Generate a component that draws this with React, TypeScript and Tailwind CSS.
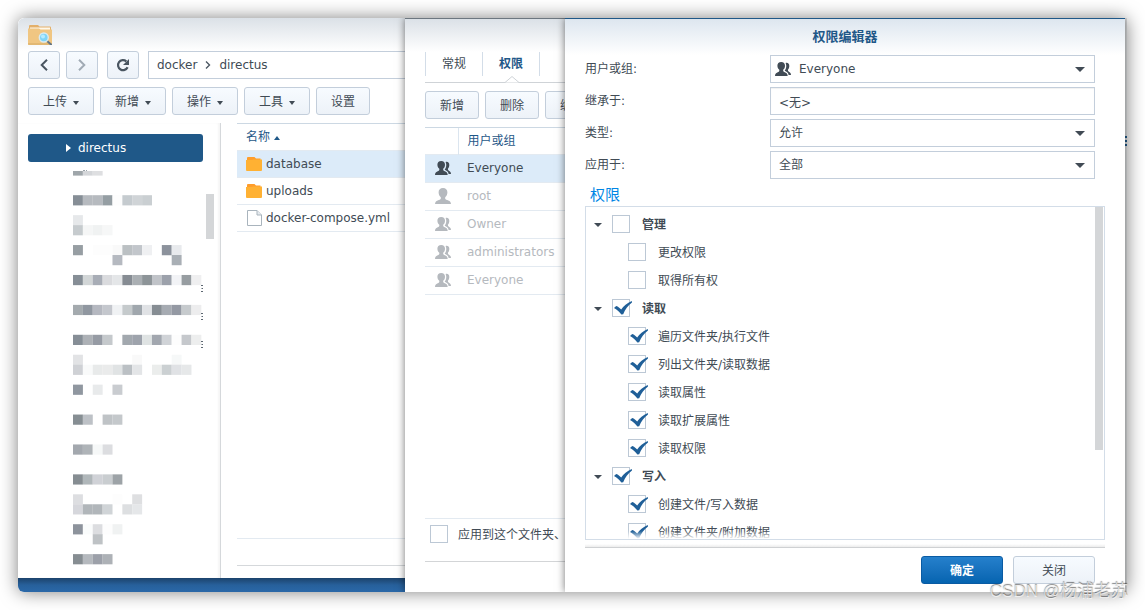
import React from "react";

const FONT = "font-['DejaVu_Sans','Noto_Sans_CJK_SC',sans-serif]";
const BTN =
  "flex h-7 shrink-0 items-center justify-center rounded-[3px] border border-[#c3cedb] bg-gradient-to-b from-[#f7fbff] to-[#edf2f8] text-xs text-[#414b55]";

function FolderSearchIcon() {
  return (
    <svg className="h-5 w-6" viewBox="0 0 24 20" aria-hidden="true">
      <path d="M1 2V1a1 1 0 0 1 1-1h8l1.500 1.500H22a1 1 0 0 1 1 1V8H1z" fill="#e3b06a" />
      <path d="M2 2.500h20V7H2z" fill="#fff8ea" />
      <path d="M0 3.500h11l1.500 1H24V19a1 1 0 0 1-1 1H1a1 1 0 0 1-1-1z" fill="#f0c682" />
      <path d="M0 18h24v1a1 1 0 0 1-1 1H1a1 1 0 0 1-1-1z" fill="#e2b873" />
      <path d="M18.500 15.500l4.500 4" stroke="#637585" strokeWidth="2" strokeLinecap="round" />
      <circle cx="15.800" cy="12.500" r="4.500" fill="#7fd5f8" stroke="#d9eaf0" strokeWidth="1.400" />
      <circle cx="15" cy="11.500" r="2" fill="#b5ebff" />
    </svg>
  );
}

function Chevron({ dir, className }: { dir: "left" | "right"; className: string }) {
  return (
    <svg className={className} viewBox="0 0 8 12" fill="none" stroke="currentColor" strokeWidth="2" aria-hidden="true">
      <path d={dir === "left" ? "M7 .8L1.700 6L7 11.200" : "M1 .8L6.300 6L1 11.200"} />
    </svg>
  );
}

function ReloadIcon() {
  return (
    <svg className="h-3.5 w-3.5" viewBox="0 0 14 14" aria-hidden="true">
      <path d="M11.600 9.200A5 5 0 1 1 10.300 3.300" fill="none" stroke="#4a5661" strokeWidth="2.200" />
      <path d="M13 1v6H7z" fill="#4a5661" />
    </svg>
  );
}

function Caret({ className, up = false }: { className: string; up?: boolean }) {
  return (
    <svg className={className} viewBox="0 0 10 5" preserveAspectRatio="none" fill="currentColor" aria-hidden="true">
      <path d={up ? "M0 5L5 0L10 5z" : "M0 0h10L5 5z"} />
    </svg>
  );
}

function FolderIcon() {
  return (
    <svg className="h-3.5 w-4" viewBox="0 0 16 14" aria-hidden="true">
      <path d="M1 3V1a1 1 0 0 1 1-1h6.500L10 1.500h4.500V3z" fill="#ff9d2b" />
      <path d="M0 3h6l1-.5h9V13a1 1 0 0 1-1 1H1a1 1 0 0 1-1-1z" fill="#ffb133" />
    </svg>
  );
}

function FileIcon() {
  return (
    <svg className="h-4 w-4" viewBox="0 0 16 16" fill="#fff" stroke="#a9b4bd" aria-hidden="true">
      <path d="M1.500 .5H11L15.500 5v10.500h-14z" />
      <path d="M11 .5V5h4.500" fill="#e6ebef" />
    </svg>
  );
}

function UserIcon() {
  return (
    <svg className="h-4 w-4" viewBox="0 0 16 16" fill="currentColor" aria-hidden="true">
      <path d="M8 0c2.700 0 4.400 1.700 4.400 4.200 0 2.200-.9 4-2.200 5v1.600c.3.900 1.600 1.100 3.100 1.700 1.800.7 2.500 1.500 2.700 3.500H0c.2-2 .9-2.800 2.700-3.500 1.500-.6 2.800-.8 3.100-1.700V9.200c-1.300-1-2.200-2.800-2.200-5C3.600 1.700 5.300 0 8 0z" />
    </svg>
  );
}

function GroupIcon() {
  return (
    <svg className="h-4 w-4" viewBox="0 0 16 16" fill="currentColor" aria-hidden="true">
      <path d="M6.200 1c2.500 0 3.800 1.400 3.800 3.700 0 1.800-.7 3.200-1.800 4V10c.3.900 1.400 1.100 2.600 1.700 1.300.6 1.700 1.500 1.900 3.300H0c.1-1.800.6-2.700 1.900-3.300C3.100 11.100 4 10.900 4.300 10V8.700C3.200 7.900 2.400 6.500 2.400 4.700 2.400 2.400 3.700 1 6.200 1z" />
      <path d="M10.600 2c2.300-.6 3.900.8 3.700 3.200-.1 1.500-.6 2.700-1.300 3.400v1.200c.2.700.8 1 1.600 1.500.9.600 1.300 1.300 1.400 2.700h-2.400c-.3-1.700-1.100-2.600-2.500-3.400l-1.400-.9c1.300-1.500 2.300-4.700.9-7.700z" />
    </svg>
  );
}

/* Each entry: [row index, first column, colours of neighbouring cells]; "-" leaves a cell empty. */
const REDACTED: [number, number, string][] = [
  [0, 0, "868e96 b6babf b6babf 959ea3 fdfdfd c5cbcf d0d4d7 cacfd2"],
  [2, 0, "e6e8ea"],
  [3, 0, "c6cbce f5f6f6 f0f2f2 f6f7f7"],
  [5, 0, "979ea3 - fdfdfd fdfdfd f9f9f9 bbc0c3 c2c6cb eff0f2 - 8c929c e8eaed"],
  [6, 4, "b5b9c0"],
  [6, 10, "a9afb5"],
  [8, 0, "868e96 d2d6d7 a8adb6 dadbde e4e6e8 868c93 aaafb3 8d9498 c0c3c8 9ca1ab f2f3f6 979da1 efeff0"],
  [11, 0, "a4aaae 9097a0 b5b8c0 c4c7cd f0f2f4 c5cacc a0a7ad e0e2e5 868d93 a6abb2 9499a3 c6cacd ededee"],
  [14, 0, "868e96 adb1b6 969ba4 c5c9cc - a2a8ae 9ea3ac dfe3e3 a2a7af d0d3d7 fdfdfd c5c8cc edeeee"],
  [16, 0, "e2e3e5 - - - - - f9f9f9 - - - f6f8f8"],
  [17, 0, "cfd1d5 f9fafa e8eaea eaebeb e0e3e4 bbc0c4 e3e5e7 - ebedec cbd0d2 e0e2e5 e6e8e9"],
  [19, 0, "9097a0 - e8eaeb - c9ccd0"],
  [22, 0, "868e93 bdc1c6 - bfc3c6 c4c8cb"],
  [25, 0, "a3a8ae afb4b8 f6f8f8 dcdde0"],
  [28, 0, "868d92 b0b7ba d0d2d7 c9cdd0 9da3a7"],
  [30, 0, "dddee1 - - - fdfdfd - dedfe1"],
  [31, 0, "d6d7dc b1b6ba b1b6ba d0d4d7 - dddfe1 e5e7e9"],
  [33, 0, "8d939c fafcfc dcdde0 fdfdfd f0f2f2"],
  [34, 2, "bec2c5"],
  [36, 0, "868d92 b5b9be 9ca0a9 adb1b6"],
];

function RedactedTree() {
  return (
    <svg className="ml-[55px] h-[410px] w-[131px]" viewBox="0 0 131 410" aria-hidden="true">
      {["#9fa6aa", "#d4d6d9", "#dedfe1"].map((c, i) => (
        <rect key={c} x={i * 9.87} y="9" width="9.900" height="4.600" fill={c} />
      ))}
      <path d="M10 8.500h2M13 8.500h1" stroke="#9aa2a8" />
      {REDACTED.map(([row, col, cells]) =>
        cells.split(" ").map((c, i) =>
          c === "-" ? null : (
            <rect
              key={`${row}-${col}-${i}`}
              x={(col + i) * 9.87}
              y={33.2 + row * 9.97}
              width="9.900"
              height="10.200"
              fill={`#${c}`}
            />
          ),
        ),
      )}
      {[123, 151, 179].map((y) => (
        <path key={y} d={`M128 ${y + 0.5}h2M128.500 ${y + 3.5}h1.500M128 ${y + 6.5}h2`} stroke="#5d6872" />
      ))}
    </svg>
  );
}

function MenuButton({ label, menu = true }: { label: string; menu?: boolean }) {
  return (
    <button type="button" className={`${BTN} gap-1.5 pt-0.5 ${menu ? "w-[66px]" : "w-[54px]"}`}>
      {label}
      {menu && <Caret className="mt-0.5 h-1 w-1.5" />}
    </button>
  );
}

function FileStation() {
  const files = [
    { name: "database", icon: <FolderIcon />, row: "bg-[#dcebf9]" },
    { name: "uploads", icon: <FolderIcon />, row: "" },
    { name: "docker-compose.yml", icon: <FileIcon />, row: "" },
  ];
  return (
    <section className="flex w-[387px] shrink-0 flex-col overflow-hidden rounded-tl-md rounded-bl-[4px] bg-white">
      <header className="flex h-[33px] shrink-0 items-center bg-gradient-to-b from-[#dbe1e7] to-white pl-2.5">
        <FolderSearchIcon />
      </header>
      <nav className="flex shrink-0 pl-2.5">
        <button type="button" aria-label="Back" className={`${BTN} w-8`}>
          <Chevron dir="left" className="h-3 w-2 text-[#4a5661]" />
        </button>
        <button type="button" aria-label="Forward" className={`${BTN} ml-1.5 w-8`}>
          <Chevron dir="right" className="h-3 w-2 text-[#a1abb5]" />
        </button>
        <button type="button" aria-label="Reload" className={`${BTN} ml-[9px] w-8`}>
          <ReloadIcon />
        </button>
        <div className="ml-[9px] flex h-7 flex-1 items-center gap-2 border border-r-0 border-[#c3cedb] pl-2 text-xs text-[#414b55]">
          <a href="#docker">docker</a>
          <Chevron dir="right" className="h-2 w-1.5 text-[#4a5661]" />
          <a href="#directus">directus</a>
        </div>
      </nav>
      <div className="flex shrink-0 gap-1.5 py-2 pl-2.5">
        <MenuButton label="上传" />
        <MenuButton label="新增" />
        <MenuButton label="操作" />
        <MenuButton label="工具" />
        <MenuButton label="设置" menu={false} />
      </div>
      <div className="flex min-h-0 flex-1">
        <aside className="flex w-[203px] shrink-0 border-r border-[#d5d8db] shadow-[inset_-2px_0_2px_rgba(0,0,0,0.04)]">
          <div className="min-w-0 flex-1 overflow-hidden pt-[11px]">
            <button
              type="button"
              className="ml-2.5 flex h-7 w-[175px] items-center gap-[7px] rounded-[3px] bg-[#1f5888] pl-[38px] text-xs text-white"
            >
              <svg className="h-2 w-[5px]" viewBox="0 0 5 8" fill="#fff" aria-hidden="true">
                <path d="M0 0l5 4l-5 4z" />
              </svg>
              directus
            </button>
            <RedactedTree />
          </div>
          <div className="mt-[71px] mr-1.5 h-[45px] w-2 bg-[#d4d6d8]" />
        </aside>
        <div className="ml-4 flex flex-1 flex-col border-t border-[#ccd8e3]">
          <table className="w-full border-collapse text-xs text-[#414b55]">
            <thead>
              <tr className="h-[26px] border-b border-[#e3eaf1]">
                <th className="p-0 pl-[9px] text-left font-normal text-[#1f5888]">
                  <span className="flex items-center gap-1">
                    名称
                    <Caret up className="mt-0.5 h-1 w-1.5" />
                  </span>
                </th>
              </tr>
            </thead>
            <tbody>
              {files.map((f) => (
                <tr key={f.name} className={`h-[27px] border-b border-[#e3eaf1] ${f.row}`}>
                  <td className="p-0 pl-[9px]">
                    <span className="flex items-center gap-1 whitespace-nowrap">
                      {f.icon}
                      {f.name}
                    </span>
                  </td>
                </tr>
              ))}
            </tbody>
          </table>
          <div className="mt-auto mb-3 h-7 border-y border-t-[#e3eaf1] border-b-[#d5d8db]" />
        </div>
      </div>
      <div className="h-3.5 shrink-0 bg-gradient-to-b from-[#1c436c] via-[#27609b] to-[#2a68a8]" />
    </section>
  );
}

function Check({
  id,
  label,
  checked,
  labelClass = "pl-3",
}: {
  id: string;
  label: string;
  checked: boolean;
  labelClass?: string;
}) {
  return (
    <span className="flex items-center">
      <span className="relative flex">
        <input
          id={id}
          type="checkbox"
          defaultChecked={checked}
          className="peer h-[18px] w-[18px] appearance-none border border-[#bcc8d5] bg-white"
        />
        <svg
          className="pointer-events-none absolute top-0.5 left-0.5 hidden h-3.5 w-[18px] peer-checked:block"
          viewBox="0 0 18 14"
          aria-hidden="true"
        >
          <path
            d="M0 7L2.200 5C4.200 5.700 5.800 6.900 7.200 8.500C9.500 5.200 13 2.200 17.800 0L18 1.600C13.800 4.600 11.200 8.400 9.200 13.200L7.400 13.600C5.200 10.700 2.800 8.700 0 7z"
            fill="#1f5f98"
          />
        </svg>
      </span>
      <label htmlFor={id} className={`pt-0.5 whitespace-nowrap ${labelClass}`}>
        {label}
      </label>
    </span>
  );
}

function PropertiesDialog() {
  const rows = [
    { name: "Everyone", icon: <GroupIcon />, cls: "bg-[#dcebf9] text-[#414b55]" },
    { name: "root", icon: <UserIcon />, cls: "text-[#b5b9be]" },
    { name: "Owner", icon: <GroupIcon />, cls: "text-[#b5b9be]" },
    { name: "administrators", icon: <GroupIcon />, cls: "text-[#b5b9be]" },
    { name: "Everyone", icon: <GroupIcon />, cls: "text-[#b5b9be]" },
  ];
  return (
    <section className="z-10 w-40 shrink-0 bg-white shadow-[0_0_8px_rgba(0,0,0,0.55)]">
      <div className="flex h-full flex-col overflow-hidden border-t border-[#6d7780]">
        <div className="h-[33px] shrink-0 bg-gradient-to-b from-[#dbe1e7] to-white" />
        <div className="ml-5 flex shrink-0 border-b border-[#cfd3d7] pb-1.5 text-xs">
          <button type="button" className="h-6 w-[57px] shrink-0 border-l border-[#d3dde8] text-[#414b55]">
            常规
          </button>
          <button
            type="button"
            className="relative h-6 w-[58px] shrink-0 border-x border-[#d3dde8] font-bold text-[#1f5888]"
          >
            权限
            <svg className="absolute top-6 left-5.5 h-2 w-3.5" viewBox="0 0 14 8" fill="#fff" stroke="#cfd3d7" aria-hidden="true">
              <path d="M0 6.500L7 .5L14 6.500" />
            </svg>
          </button>
        </div>
        <div className="my-2 ml-5 flex shrink-0 gap-1.5">
          <MenuButton label="新增" menu={false} />
          <MenuButton label="删除" menu={false} />
          <MenuButton label="编辑" menu={false} />
        </div>
        <div className="ml-5 flex-1 border-t border-[#ccd8e3]">
          <table className="w-full border-collapse text-xs">
            <thead>
              <tr className="h-[26px] border-b border-[#e3eaf1] text-[#1f5888]">
                <th className="w-[33px] border-r border-[#dbe5ef] p-0" />
                <th className="p-0 pl-[9px] text-left font-normal">用户或组</th>
              </tr>
            </thead>
            <tbody>
              {rows.map((r, i) => (
                <tr key={i} className={`h-7 border-b border-[#e3eaf1] ${r.cls}`}>
                  <td className="p-0 pl-2.5">{r.icon}</td>
                  <td className="p-0 pl-[9px]">{r.name}</td>
                </tr>
              ))}
            </tbody>
          </table>
        </div>
        <div className="ml-5 flex h-11 shrink-0 items-start border-y border-t-[#e3eaf1] border-b-[#d3d5d7] pt-1.5 pl-[5px] text-xs text-[#414b55]">
          <Check id="apply-sub" checked={false} label="应用到这个文件夹、子文件夹及文件" labelClass="pl-2.5" />
        </div>
        <div className="h-[30px] shrink-0" />
      </div>
    </section>
  );
}

function SelectField({ id, label, value, icon }: { id: string; label: string; value: string; icon?: React.ReactNode }) {
  return (
    <div className="flex items-center">
      <label htmlFor={id} className="w-[185px] shrink-0">
        {label}
      </label>
      <div className="relative flex-1">
        <select
          id={id}
          className={`block h-7 w-full appearance-none border border-[#c3cedb] bg-white pr-8 ${icon ? "pl-7" : "pl-2"}`}
        >
          <option>{value}</option>
        </select>
        {icon && <span className="pointer-events-none absolute top-1.5 left-[5px]">{icon}</span>}
        <Caret className="pointer-events-none absolute top-3 right-2.5 h-[5px] w-2.5" />
      </div>
    </div>
  );
}

const GROUPS = [
  { name: "管理", on: false, items: ["更改权限", "取得所有权"] },
  {
    name: "读取",
    on: true,
    items: ["遍历文件夹/执行文件", "列出文件夹/读取数据", "读取属性", "读取扩展属性", "读取权限"],
  },
  { name: "写入", on: true, items: ["创建文件/写入数据", "创建文件夹/附加数据"] },
];

function PermissionEditor() {
  return (
    <section
      role="dialog"
      aria-labelledby="editor-title"
      className="z-20 flex min-w-0 flex-1 flex-col border-t border-[#1f5888] bg-white text-xs text-[#414b55] shadow-[0_0_8px_rgba(0,0,0,0.55)]"
    >
      <header className="flex h-9 shrink-0 items-center justify-center bg-gradient-to-b from-[#dde6ef] to-white">
        <h1 id="editor-title" className="text-[13px] font-bold text-[#1f5888]">
          权限编辑器
        </h1>
      </header>
      <div className="flex shrink-0 flex-col gap-1 pr-[30px] pl-5">
        <SelectField id="principal" label="用户或组:" value="Everyone" icon={<GroupIcon />} />
        <div className="flex items-center">
          <label htmlFor="inherit" className="w-[185px] shrink-0">
            继承于:
          </label>
          <input
            id="inherit"
            readOnly
            defaultValue="<无>"
            className="h-7 min-w-0 flex-1 border border-[#c3cedb] pl-2 shadow-[inset_0_1px_1px_rgba(0,0,0,0.06)]"
          />
        </div>
        <SelectField id="type" label="类型:" value="允许" />
        <SelectField id="scope" label="应用于:" value="全部" />
      </div>
      <h2 className="flex h-[27px] shrink-0 items-end pl-[25px] text-[15px] text-[#0086e5]">权限</h2>
      <div className="relative mr-5 ml-5 flex min-h-0 flex-1 border border-[#d3dde8]">
        <div className="min-w-0 flex-1 overflow-hidden pt-[3px]">
          {GROUPS.map((g, gi) => (
            <div key={g.name}>
              <div className="flex h-7 items-center pl-2">
                <Caret className="mt-px mr-2.5 h-1 w-2" />
                <Check id={`group-${gi}`} checked={g.on} label={g.name} labelClass="pl-3 font-bold" />
              </div>
              {g.items.map((item, i) => (
                <div key={item} className="flex h-7 items-center pl-[42px]">
                  <Check id={`perm-${gi}-${i}`} checked={g.on} label={item} />
                </div>
              ))}
            </div>
          ))}
        </div>
        <div className="mr-px h-[243px] w-2 shrink-0 bg-[#d4d6d8]" />
        <div className="pointer-events-none absolute inset-x-0 bottom-0 h-2 bg-gradient-to-b from-white/0 to-white" />
      </div>
      <div className="mx-5 mt-1 h-1 shrink-0 border-b border-[#cfd1d3] bg-gradient-to-b from-white to-[#ececec]" />
      <footer className="flex shrink-0 justify-end gap-2.5 py-2 pr-[30px]">
        <button
          type="button"
          className="h-7 w-[82px] rounded-[3px] border border-[#0a5ba3] bg-gradient-to-b from-[#2580cc] to-[#0564b0] pt-0.5 font-bold text-white"
        >
          确定
        </button>
        <button type="button" className={`${BTN} w-[82px] pt-0.5`}>
          关闭
        </button>
      </footer>
    </section>
  );
}

export default function App() {
  return (
    <div className={`relative flex h-screen overflow-hidden bg-white p-[18px] ${FONT}`}>
      <main className="flex min-w-0 flex-1 rounded-md shadow-[0_0_18px_rgba(0,0,0,0.5)]">
        <div className="flex min-w-0 flex-1 overflow-hidden rounded-l-md">
          <FileStation />
          <PropertiesDialog />
          <PermissionEditor />
          <div className="mt-0.5 w-0.5 shrink-0 bg-[#d9dbdd]">
            <svg className="mt-[116px] h-2.5 w-0.5" viewBox="0 0 2 10" stroke="#1f5888" strokeWidth="2" aria-hidden="true">
              <path d="M0 1h2M0 5h2M0 9h2" />
            </svg>
          </div>
        </div>
      </main>
      <p className="pointer-events-none absolute right-[17px] bottom-1.5 z-30 font-['Liberation_Sans','Noto_Sans_CJK_SC',sans-serif] text-[17px] whitespace-nowrap text-white/70 [text-shadow:0_-1px_1px_rgba(0,0,0,0.5)]">
        CSDN @杨浦老苏
      </p>
    </div>
  );
}
